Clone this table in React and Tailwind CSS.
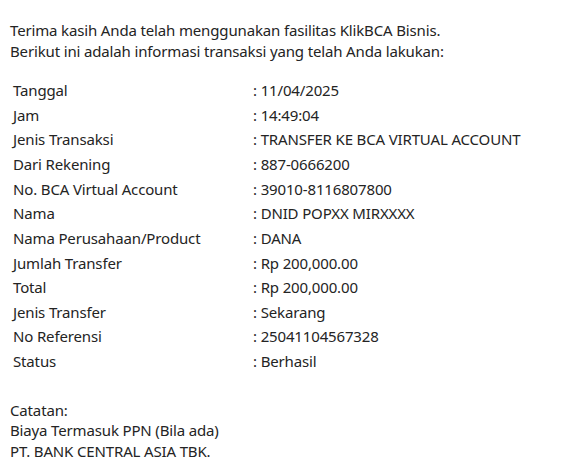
const ROWS = [
  ['Tanggal', '11/04/2025'],
  ['Jam', '14:49:04'],
  ['Jenis Transaksi', 'TRANSFER KE BCA VIRTUAL ACCOUNT'],
  ['Dari Rekening', '887-0666200'],
  ['No. BCA Virtual Account', '39010-8116807800'],
  ['Nama', 'DNID POPXX MIRXXXX'],
  ['Nama Perusahaan/Product', 'DANA'],
  ['Jumlah Transfer', 'Rp 200,000.00'],
  ['Total', 'Rp 200,000.00'],
  ['Jenis Transfer', 'Sekarang'],
  ['No Referensi', '25041104567328'],
  ['Status', 'Berhasil'],
];

export default function App() {
  return (
    <div className="min-h-[465px] bg-white px-[10px] pt-[20px] text-[15px] leading-[20.5px] tracking-[-0.15px] text-[#242424] font-['Noto_Sans',sans-serif]">
      <p>Terima kasih Anda telah menggunakan fasilitas KlikBCA Bisnis.</p>
      <p>Berikut ini adalah informasi transaksi yang telah Anda lakukan:</p>

      <div className="mt-[17px] flex flex-col">
        {ROWS.map(([label, value]) => (
          <div key={label} className="flex h-[24.65px] items-center">
            <span className="w-[243px] pl-[3px]">{label}</span>
            <span>: {value}</span>
          </div>
        ))}
      </div>

      <div className="mt-[26px]">
        <p>Catatan:</p>
        <p>Biaya Termasuk PPN (Bila ada)</p>
        <p>PT. BANK CENTRAL ASIA TBK.</p>
      </div>
    </div>
  );
}
